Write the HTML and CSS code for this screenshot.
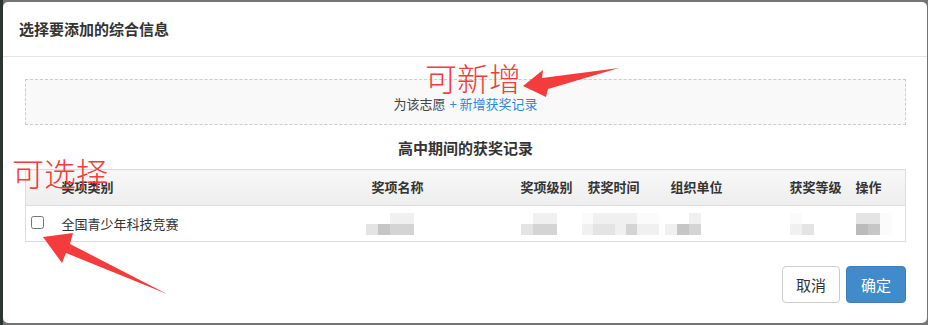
FILE: index.html
```html
<!doctype html>
<html lang="zh-CN">
    <head>
        <meta charset="UTF-8" />
        <meta name="viewport" content="width=device-width, initial-scale=1.0" />
        <title>选择要添加的综合信息</title>
        <link rel="stylesheet" href="styles.css">
    </head>
    <body>
        <div class="modal">
            <div class="modal-header">
                <h4 class="modal-title">选择要添加的综合信息</h4>
            </div>

            <div class="modal-body">
                <div class="add-box">
                    为该志愿 <a class="add-link" href="#">+ 新增获奖记录</a>
                </div>

                <h5 class="section-title">高中期间的获奖记录</h5>

                <table class="award-table">
                    <colgroup>
                        <col class="col-check">
                        <col class="col-type">
                        <col class="col-name">
                        <col class="col-level">
                        <col class="col-time">
                        <col class="col-org">
                        <col class="col-grade">
                        <col class="col-op">
                    </colgroup>
                    <thead>
                        <tr>
                            <th></th>
                            <th>奖项类别</th>
                            <th>奖项名称</th>
                            <th>奖项级别</th>
                            <th>获奖时间</th>
                            <th>组织单位</th>
                            <th>获奖等级</th>
                            <th>操作</th>
                        </tr>
                    </thead>
                    <tbody>
                        <tr>
                            <td class="check-cell"><input type="checkbox"></td>
                            <td>全国青少年科技竞赛</td>
                            <td class="blur-cell">
                                <div class="blur">
                                    <div class="blur-row"><span></span><span></span><span class="b1"></span><span class="b1"></span></div>
                                    <div class="blur-row"><span class="b2"></span><span class="b4"></span><span class="b3"></span><span class="b3"></span></div>
                                </div>
                            </td>
                            <td>
                                <div class="blur">
                                    <div class="blur-row"><span></span><span class="b1"></span><span class="b1"></span></div>
                                    <div class="blur-row"><span class="b2"></span><span class="b3"></span><span class="b3"></span></div>
                                </div>
                            </td>
                            <td class="blur-cell">
                                <div class="blur">
                                    <div class="blur-row"><span class="b0"></span><span class="b1"></span><span class="b1"></span><span class="b1"></span><span class="b1"></span><span class="b0"></span><span class="b0"></span></div>
                                    <div class="blur-row"><span class="b1"></span><span class="b2"></span><span class="b2"></span><span class="b1"></span><span class="b3"></span><span class="b1"></span><span class="b1"></span></div>
                                </div>
                            </td>
                            <td class="blur-cell">
                                <div class="blur">
                                    <div class="blur-row"><span></span><span></span><span class="b1"></span></div>
                                    <div class="blur-row"><span class="b1"></span><span class="b4"></span><span class="b3"></span></div>
                                </div>
                            </td>
                            <td>
                                <div class="blur">
                                    <div class="blur-row"><span class="b0"></span><span></span></div>
                                    <div class="blur-row"><span class="b1"></span><span class="b2"></span></div>
                                </div>
                            </td>
                            <td>
                                <div class="blur">
                                    <div class="blur-row"><span class="b2"></span><span class="b2"></span><span class="b0"></span></div>
                                    <div class="blur-row"><span class="b5"></span><span class="b4"></span><span class="b0"></span></div>
                                </div>
                            </td>
                        </tr>
                    </tbody>
                </table>
            </div>

            <div class="modal-footer">
                <button class="btn btn-default">取消</button>
                <button class="btn btn-primary">确定</button>
            </div>
        </div>

        <!-- annotations drawn over the screenshot -->
        <div class="note note-add">可新增</div>
        <div class="note note-select">可选择</div>
        <svg class="arrows" width="928" height="325" viewBox="0 0 928 325">
            <polygon points="523,86 543,70 542,78 619,68 548,89 546,97" />
            <polygon points="43,237 73,233 70,244 167,294 66,253 62,263" />
        </svg>
    </body>
</html>
```

FILE: styles.css
```css
* {
    margin: 0;
    padding: 0;
    box-sizing: border-box;
}

body {
    font-family: "Noto Sans CJK SC", "Liberation Sans", sans-serif;
    font-size: 13px;
    color: #333;
    background: linear-gradient(to right, #2c3532 0 3px, #747474 3px);
    width: 928px;
    height: 325px;
    overflow: hidden;
    padding: 2px 1px 2px 3px;
}

.modal {
    background: #fff;
    height: 321px;
    border-radius: 5px;
    display: flex;
    flex-direction: column;
}

.modal-header {
    padding: 17px 16px;
    border-bottom: 1px solid #e5e5e5;
}

.modal-title {
    font-size: 15px;
    line-height: 20px;
    font-weight: bold;
}

.modal-body {
    padding: 22px 21px 0 22px;
}

.add-box {
    height: 46px;
    border: 1px dashed #ccc;
    background: #f9f9f9;
    display: flex;
    align-items: center;
    justify-content: center;
    gap: 4px;
    color: #444;
    padding-top: 2px;
}

.add-link {
    color: #2a8ae0;
    text-decoration: none;
}

.section-title {
    text-align: center;
    font-size: 15px;
    line-height: 20px;
    font-weight: bold;
    margin: 13px 0 11px;
}

.award-table {
    width: 880px;
    border-collapse: collapse;
    table-layout: fixed;
    border: 1px solid #ddd;
}

.col-check { width: 30px; }
.col-type { width: 310px; }
.col-name { width: 149px; }
.col-level { width: 67px; }
.col-time { width: 83px; }
.col-org { width: 119px; }
.col-grade { width: 66px; }
.col-op { width: 56px; }

.award-table th {
    height: 36px;
    text-align: left;
    font-weight: bold;
    padding: 0 6px 2px;
    background: linear-gradient(#f8f8f8, #ededed);
    border-bottom: 1px solid #ddd;
    white-space: nowrap;
}

.award-table td {
    height: 36px;
    padding: 0 6px;
    vertical-align: middle;
    white-space: nowrap;
}

.award-table .check-cell {
    padding: 0 0 0 1px;
}

.award-table .blur-cell {
    padding-left: 0;
}

.check-cell input {
    display: block;
    width: 13px;
    height: 13px;
    margin: 0 0 2px 4px;
}

.blur {
    display: flex;
    flex-direction: column;
}

.blur-row {
    display: flex;
}

.blur-row span {
    width: 12px;
    height: 11px;
}

.blur-row span.b0 { background: #fbfbfb; }
.blur-row span.b1 { background: #f0f0f0; }
.blur-row span.b2 { background: #e4e4e4; }
.blur-row span.b3 { background: #d4d4d4; }
.blur-row span.b4 { background: #c6c6c6; }
.blur-row span.b5 { background: #bbbbbb; }

.modal-footer {
    margin-top: auto;
    display: flex;
    justify-content: flex-end;
    gap: 6px;
    padding: 0 21px 20px;
}

.btn {
    font-family: "Noto Sans CJK SC", "Liberation Sans", sans-serif;
    font-size: 15px;
    line-height: 19px;
    padding: 8px 13px;
    border: 1px solid #ccc;
    border-radius: 4px;
    background: #fff;
    color: #333;
}

.btn-primary {
    padding: 8px 14px;
    background: #428bca;
    border-color: #3b80bd;
    color: #fff;
}

.note {
    position: absolute;
    font-size: 32px;
    line-height: 32px;
    font-weight: 300;
    color: #f53b3b;
    white-space: nowrap;
}

.note-add {
    left: 425px;
    top: 61px;
}

.note-select {
    left: 12px;
    top: 156px;
}

.arrows {
    position: absolute;
    left: 0;
    top: 0;
    pointer-events: none;
    fill: #f53b3b;
}
```
